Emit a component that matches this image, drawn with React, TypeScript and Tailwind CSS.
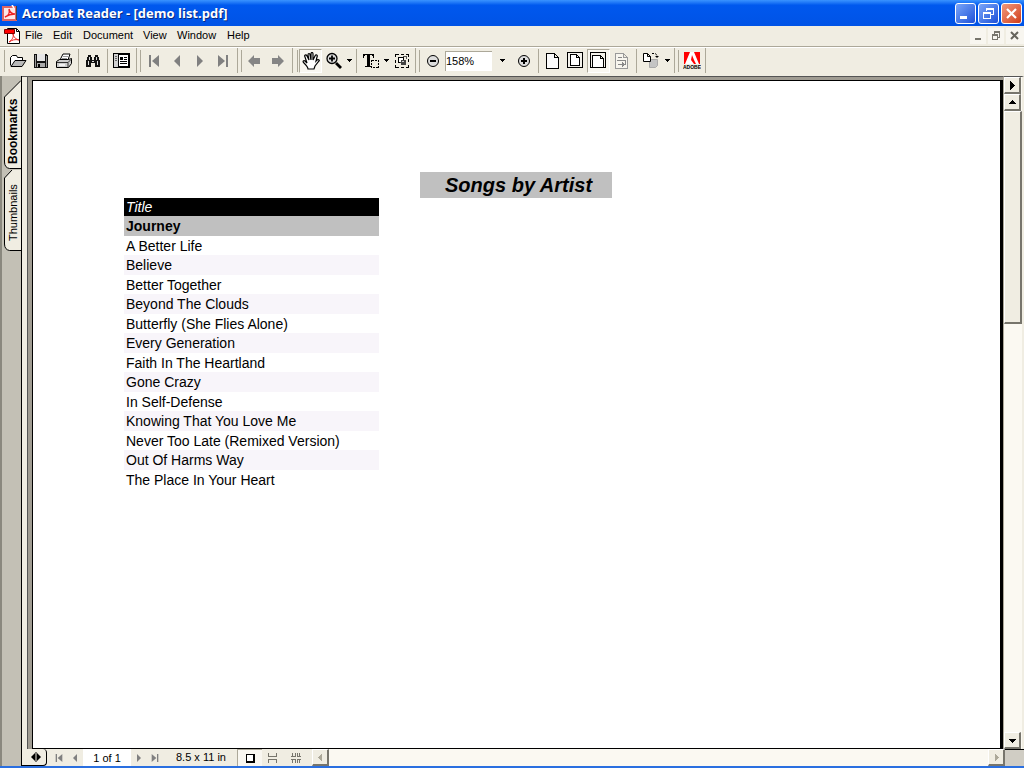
import React from 'react';

const MENUS = [
  { label: 'File', width: 'w-7' },
  { label: 'Edit', width: 'w-[30px]' },
  { label: 'Document', width: 'w-[60px]' },
  { label: 'View', width: 'w-[34px]' },
  { label: 'Window', width: 'w-[50px]' },
  { label: 'Help', width: 'w-8' },
];

const SONGS = [
  'A Better Life',
  'Believe',
  'Better Together',
  'Beyond The Clouds',
  'Butterfly (She Flies Alone)',
  'Every Generation',
  'Faith In The Heartland',
  'Gone Crazy',
  'In Self-Defense',
  'Knowing That You Love Me',
  'Never Too Late (Remixed Version)',
  'Out Of Harms Way',
  'The Place In Your Heart',
];

interface IconProps {
  children: React.ReactNode;
  w?: number;
  h?: number;
}

function Icon({ children, w = 18, h = 18 }: IconProps) {
  return (
    <svg width={w} height={h} viewBox={`0 0 ${w} ${h}`} fill="none" className="shrink-0" shapeRendering="crispEdges" aria-hidden="true">
      {children}
    </svg>
  );
}

interface ToolButtonProps {
  label: string;
  pressed?: boolean;
  children: React.ReactNode;
}

function ToolButton({ label, pressed, children }: ToolButtonProps) {
  return (
    <button
      type="button"
      aria-label={label}
      className={`flex h-6 w-[23px] shrink-0 items-center justify-center ${
        pressed ? 'border border-t-[#aca899] border-l-[#aca899] border-r-white border-b-white bg-[#f9f7f1]' : ''
      }`}
    >
      {children}
    </button>
  );
}

function Separator() {
  return (
    <div className="flex w-[6px] shrink-0 justify-center">
      <div className="h-6 w-px bg-[#aca899]" />
    </div>
  );
}

function Group({ children, className = 'pl-[3px] pr-[3px]' }: { children: React.ReactNode; className?: string }) {
  return (
    <div className={`flex h-[25px] shrink-0 items-center border-r border-[#aca899] ${className}`}>
      <div className="mr-px h-[22px] w-px shrink-0 bg-[#aca899]" />
      {children}
    </div>
  );
}

function DropArrow({ label, width }: { label: string; width: string }) {
  return (
    <button type="button" aria-label={label} className={`flex h-6 shrink-0 items-center justify-center ${width}`}>
      <Icon w={5} h={3}><path d="M0 0h5v1h-5zM1 1h3v1h-3zM2 2h1v1h-1z" fill="#000" /></Icon>
    </button>
  );
}

function Triangle({ dir, bar, small }: { dir: 'left' | 'right'; bar?: boolean; small?: boolean }) {
  const size = small ? 8 : 12;
  return (
    <svg width={size} height={size} viewBox="0 0 12 12" className={dir === 'right' ? 'rotate-180' : ''} fill="#808080" aria-hidden="true">
      {bar && <path d="M1 0h2v12h-2z" />}
      <path d={bar ? 'M11 0v12L4 6z' : 'M9 0v12L3 6z'} />
    </svg>
  );
}

function PdfIcon() {
  return (
    <svg width="18" height="18" viewBox="0 0 18 18" fill="none" aria-hidden="true">
      <path d="M3.500 1.500h9l3 3v12h-12z" fill="#fff" stroke="#000" />
      <path d="M12.500 1.500v3h3" stroke="#000" />
      <path d="M0.500 2.500h10v4h-10z" fill="#f00" stroke="#700" />
      <path d="M5 15c3-2 5-5 4-8 1 4 3 5 6 6-4-1-7 0-10 2z" stroke="#e22" />
    </svg>
  );
}

function TitleBar() {
  return (
    <header className="flex h-[26px] shrink-0 items-center bg-linear-to-b from-[#3a93ff] via-[#0058ee] via-20% to-[#0053e6] pr-[2px] pl-[2px]">
      <svg width="16" height="16" viewBox="0 0 16 16" fill="none" aria-hidden="true">
        <path d="M1 2h13v13H1z" fill="#fce8e8" stroke="#d66" strokeWidth="2" />
        <path d="M3 12c3-1 5-4 4-8 1 4 3 5 6 5-4 0-7 1-10 3z" stroke="#e22" strokeWidth="1.400" />
        <path d="M14.500 1v14" stroke="#444" />
        <path d="M10 0l2 3" stroke="#fff" strokeWidth="1.500" />
      </svg>
      <h1 className="ml-1 flex-1 text-[13px] leading-4 font-bold text-white font-['Open_Sans',sans-serif] [text-shadow:1px_1px_#0a2a80]">
        Acrobat Reader - [demo list.pdf]
      </h1>
      <div className="flex gap-[2px]">
        <button type="button" aria-label="Minimize" className="flex h-[21px] w-[21px] items-center justify-center rounded-[3px] border border-white bg-linear-to-br from-[#7ba5f8] to-[#1f4fd8]">
          <Icon w={15} h={15}><path d="M2 10h7v3h-7z" fill="#fff" /></Icon>
        </button>
        <button type="button" aria-label="Restore" className="flex h-[21px] w-[21px] items-center justify-center rounded-[3px] border border-white bg-linear-to-br from-[#7ba5f8] to-[#1f4fd8]">
          <Icon w={15} h={15}>
            <path d="M5.500 5V2.500h7v6H10" stroke="#fff" />
            <path d="M5 2h8v2H5z" fill="#fff" />
            <path d="M2.500 6.500h7v6h-7z" stroke="#fff" />
            <path d="M2 6h8v2H2z" fill="#fff" />
          </Icon>
        </button>
        <button type="button" aria-label="Close" className="flex h-[21px] w-[21px] items-center justify-center rounded-[3px] border border-white bg-linear-to-br from-[#f0987c] to-[#d03a12]">
          <svg width="15" height="15" viewBox="0 0 15 15" aria-hidden="true"><path d="M3 3l9 9M12 3l-9 9" stroke="#fff" strokeWidth="2.200" /></svg>
        </button>
      </div>
    </header>
  );
}

function MenuBar() {
  return (
    <nav className="flex h-[21px] shrink-0 items-center border-b border-[#aca899] pl-1">
      <PdfIcon />
      <div className="ml-[3px] flex flex-1">
        {MENUS.map((m) => (
          <button key={m.label} type="button" className={`h-5 pb-[2px] text-left leading-[18px] ${m.width}`}>{m.label}</button>
        ))}
      </div>
      <div className="flex gap-[2px]">
        <button type="button" aria-label="Minimize document" className="flex h-4 w-4 items-center justify-center bg-[#f8f6f0]">
          <Icon w={12} h={12}><path d="M3 8h6v2h-6z" fill="#77756c" /></Icon>
        </button>
        <button type="button" aria-label="Restore document" className="flex h-4 w-4 items-center justify-center bg-[#f8f6f0]">
          <Icon w={12} h={12}>
            <path d="M4.500 4V2.500h5v5H8M2.500 5.500h5v4h-5z" stroke="#77756c" />
            <path d="M4 1h6v1h-6zM2 4h6v1h-6z" fill="#77756c" />
          </Icon>
        </button>
        <button type="button" aria-label="Close document" className="flex h-4 w-[18px] items-center justify-center bg-[#f8f6f0]">
          <svg width="12" height="12" viewBox="0 0 12 12" aria-hidden="true"><path d="M2 2l7 7M9 2L2 9" stroke="#66645c" strokeWidth="2" /></svg>
        </button>
      </div>
    </nav>
  );
}

function Toolbar() {
  return (
    <div role="toolbar" aria-label="Main toolbar" className="flex h-[29px] shrink-0 items-start border-t border-white">
      <Group className="ml-px pr-[3px] pl-[3px]">
        <ToolButton label="Open">
          <svg width="18" height="16" viewBox="0 0 18 16" fill="none" aria-hidden="true">
            <path d="M1.500 12.500v-8l2-2h4l1 2h5v3" fill="#fff" stroke="#000" />
            <path d="M2 13.500l4-6h11l-4 6z" fill="#b8b8b8" stroke="#000" />
          </svg>
        </ToolButton>
        <ToolButton label="Save">
          <Icon w={16} h={16}>
            <path d="M1 1h13v1h1v13H1z" fill="#111" />
            <path d="M2 2h1v12H2zM13 3h1v11h-1z" fill="#999" />
            <path d="M4 1h8v7H4z" fill="#e6e6e6" />
            <path d="M4 10h8v4H4z" fill="#aaa" />
            <path d="M5 11h2v3H5z" fill="#000" />
          </Icon>
        </ToolButton>
        <ToolButton label="Print">
          <svg width="18" height="16" viewBox="0 0 18 16" fill="none" aria-hidden="true">
            <path d="M5 7l3-6h7l-2 6" fill="#fff" stroke="#000" />
            <path d="M8 3.500h5M7 5.500h5" stroke="#999" />
            <path d="M1.500 8.500l3-2h9l3-1v5l-3 4h-12z" fill="#ccc" stroke="#000" />
            <path d="M2 9.500h11v5M13 9.500l3-3" stroke="#333" />
            <path d="M4 12h6" stroke="#fff" strokeWidth="1.500" />
          </svg>
        </ToolButton>
        <Separator />
        <ToolButton label="Find">
          <Icon w={16} h={16}>
            <path d="M3 2h3v2h1v3h2V4h1V2h3v2h1v3h1v7h-5v-4H6v4H1V7h1V4h1z" fill="#111" />
            <path d="M4 4h1v3h-1zM11 4h1v3h-1zM3 8h1v4h-1zM12 8h1v4h-1zM7 8h2v1H7z" fill="#ddd" />
          </Icon>
        </ToolButton>
        <Separator />
        <ToolButton label="Show/Hide Navigation Pane">
          <Icon w={17} h={15}>
            <path d="M0 0h17v15H0z" fill="#000" />
            <path d="M1 1h4v13H1z" fill="#d0d0d0" />
            <path d="M6 2h9v11H6z" fill="#fff" />
            <path d="M7 4h3v3H7zM11 4h3v1h-3zM11 6h3v1h-3zM7 8h7v1H7zM7 10h7v1H7z" fill="#000" />
            <path d="M2 3h2v1h-2zM2 5h2v1h-2zM2 7h2v1h-2z" fill="#666" />
          </Icon>
        </ToolButton>
      </Group>

      <Group>
        <ToolButton label="First Page"><Triangle dir="left" bar /></ToolButton>
        <ToolButton label="Previous Page"><Triangle dir="left" /></ToolButton>
        <ToolButton label="Next Page"><Triangle dir="right" /></ToolButton>
        <ToolButton label="Last Page"><Triangle dir="right" bar /></ToolButton>
      </Group>

      <Group>
        <ToolButton label="Go to Previous View">
          <svg width="13" height="12" viewBox="0 0 13 12" aria-hidden="true"><path d="M0 6l6-6v3h6v6H6v3z" fill="#858585" /></svg>
        </ToolButton>
        <ToolButton label="Go to Next View">
          <svg width="13" height="12" viewBox="0 0 13 12" aria-hidden="true"><path d="M13 6L7 0v3H1v6h6v3z" fill="#858585" /></svg>
        </ToolButton>
      </Group>

      <Group className="pr-[2px] pl-1">
        <ToolButton label="Hand Tool" pressed>
          <svg width="18" height="18" viewBox="0 0 18 18" fill="#fff" stroke="#000" strokeWidth="1.200" className="shrink-0" aria-hidden="true">
            <path d="M6 17c0-2-2-4-4-6-2-2 0-3 1-2l2 2L3 5c-1-2 1-3 2-1l2 4-1-5c0-2 2-2 2 0l1 5V2c0-2 2-2 2 0v6l2-4c1-2 3-1 2 1l-1 4 1-1c1-1 3 0 2 1l-4 5-1 3z" />
          </svg>
        </ToolButton>
        <ToolButton label="Zoom In Tool">
          <svg width="18" height="18" viewBox="0 0 18 18" fill="none" className="shrink-0" aria-hidden="true">
            <circle cx="7" cy="6.500" r="5" fill="#ddd" stroke="#000" strokeWidth="1.300" />
            <path d="M4 6.500h6M7 3.500v6" stroke="#000" strokeWidth="1.800" />
            <path d="M11 11l5 5" stroke="#000" strokeWidth="2.800" />
          </svg>
        </ToolButton>
        <DropArrow label="Zoom tools" width="w-2" />
        <Separator />
        <ToolButton label="Text Select Tool">
          <Icon w={18} h={18}>
            <path d="M1 2h11v4h-1V4h-1V3H8v11h2v1H3v-1h2V3H3v1H2v2H1z" fill="#000" />
            <path d="M9.500 8.500h7v7h-7z" stroke="#000" strokeDasharray="2 1" />
          </Icon>
        </ToolButton>
        <DropArrow label="Selection tools" width="w-2" />
        <ToolButton label="Graphics Select Tool">
          <Icon w={16} h={16}>
            <path d="M1.500 4V1.500H5M7 1.500h3M12 1.500h2.500V4M14.500 6v3M14.500 12v2.500H12M10 14.500H7M5 14.500H1.500V12M1.500 10V7" stroke="#000" />
            <path d="M4.500 4.500h5v5h-5z" fill="#fff" stroke="#000" />
            <path d="M9 3h3v3" stroke="#555" />
            <circle cx="9.500" cy="9.500" r="3" fill="#444" />
            <path d="M8 8h2v1H8z" fill="#ccc" />
          </Icon>
        </ToolButton>
      </Group>

      <Group className="pr-[2px] pl-[3px]">
        <ToolButton label="Zoom Out">
          <svg width="14" height="14" viewBox="0 0 14 14" aria-hidden="true">
            <circle cx="7" cy="7" r="5.500" fill="#ddd" stroke="#000" />
            <path d="M4 7h6" stroke="#000" strokeWidth="2" />
          </svg>
        </ToolButton>
        <input aria-label="Magnification" defaultValue="158%" className="ml-px h-5 w-[47px] border-t border-l border-[#aca899] bg-white text-[11px] outline-none" />
        <DropArrow label="Magnification list" width="w-5" />
        <ToolButton label="Zoom In">
          <svg width="14" height="14" viewBox="0 0 14 14" aria-hidden="true">
            <circle cx="7" cy="7" r="5.500" fill="#ddd" stroke="#000" />
            <path d="M4 7h6M7 4v6" stroke="#000" strokeWidth="2" />
          </svg>
        </ToolButton>
        <Separator />
        <ToolButton label="Actual Size">
          <Icon w={15} h={18}><path d="M1.500 1.500h8l4 4v11h-12zM9.500 1.500v4h4" fill="#fafafa" stroke="#000" /></Icon>
        </ToolButton>
        <ToolButton label="Fit in Window">
          <Icon w={17} h={17}>
            <path d="M0.500 0.500h15v15h-15z" fill="#f4f2ec" stroke="#000" />
            <path d="M3.500 2.500h6l3 3v8h-9zM9.500 2.500v3h3" fill="#fff" stroke="#000" />
          </Icon>
        </ToolButton>
        <ToolButton label="Fit Width" pressed>
          <Icon w={17} h={17}>
            <path d="M0.500 0.500h15v15h-15z" fill="#f4f2ec" stroke="#000" />
            <path d="M2.500 15V3.500h8l3 3V15M10.500 3.500v3h3" fill="#fff" stroke="#000" />
          </Icon>
        </ToolButton>
        <ToolButton label="Reflow">
          <Icon w={15} h={18}>
            <path d="M1.500 1.500h8l4 4v11h-12zM9.500 1.500v4h4" fill="#f7f5ee" stroke="#999" />
            <path d="M4 5.500h4M3 8.500h8v4H4" stroke="#888" />
            <path d="M8 10l3 2.500-3 2.500z" fill="#888" />
          </Icon>
        </ToolButton>
        <Separator />
        <ToolButton label="Rotate View">
          <svg width="18" height="17" viewBox="0 0 18 17" fill="none" className="shrink-0" aria-hidden="true">
            <path d="M7.500 7.500h8v6l-2 2h-6z" fill="#c4c4c4" stroke="#aaa" />
            <path d="M1.500 1.500h4l3 3v5h-7zM5.500 1.500v3h3" fill="#fff" stroke="#000" />
            <path d="M10 1.500h2c2 0 3 1 3 3" stroke="#000" strokeDasharray="2 1" />
            <path d="M13 4h4l-2 2z" fill="#000" />
          </svg>
        </ToolButton>
        <DropArrow label="Rotate options" width="w-[10px]" />
      </Group>

      <Group className="pr-[2px] pl-[3px]">
        <ToolButton label="Adobe on the Web">
          <svg width="18" height="19" viewBox="0 0 18 19" className="shrink-0" aria-hidden="true">
            <path d="M1 1h16v12H1z" fill="#f00" />
            <path d="M7 1h4l5 12h-3l-2-4H8l3 4H2z" fill="#fff" />
            <path d="M9 4l2 5H8z" fill="#f00" />
            <text x="9" y="18" fontSize="5" fontWeight="bold" textAnchor="middle">ADOBE</text>
          </svg>
        </ToolButton>
      </Group>
    </div>
  );
}

function NavTabs() {
  return (
    <aside className="flex w-[22px] shrink-0 flex-col border-r border-l-2 border-r-black border-l-[#8a887e] bg-[#c3c0b5] pt-1">
      <button type="button" className="relative h-[90px] w-full">
        <svg width="18" height="90" viewBox="0 0 18 90" className="absolute top-0 right-0" aria-hidden="true">
          <path d="M18 0.500L1.500 17v65c0 4 2 6 5 6.500H18" fill="#f0ede2" stroke="#000" />
        </svg>
        <span className="relative ml-[3px] mt-3 flex h-[76px] w-4 rotate-180 items-center justify-center text-[12px] font-bold [writing-mode:vertical-rl]">Bookmarks</span>
      </button>
      <button type="button" className="relative h-[82px] w-full">
        <svg width="18" height="82" viewBox="0 0 18 82" className="absolute top-0 right-0" aria-hidden="true">
          <path d="M9 0L1.500 8v66c0 4 2 6 5 6.500H18V0z" fill="#f0ede2" />
          <path d="M9 0L1.500 8v66c0 4 2 6 5 6.500H18" fill="none" stroke="#000" />
        </svg>
        <span className="relative ml-[3px] mt-1 flex h-[78px] w-4 rotate-180 items-center justify-center text-[11px] [writing-mode:vertical-rl]">Thumbnails</span>
      </button>
    </aside>
  );
}

function DocumentPage() {
  return (
    <main className="min-w-0 flex-1 border-t border-l border-[#555] bg-[#a09c92] pt-[3px] pl-1">
      <div className="h-full border-t border-r-[3px] border-b border-l border-black bg-white pt-[91px] pl-[91px]">
        <h2 className="ml-[296px] flex h-[26px] w-48 items-center bg-[#c0c0c0] pl-[25px] text-[20px] leading-6 font-bold italic whitespace-nowrap">Songs by Artist</h2>
        <table className="w-[255px] border-collapse text-[14px] leading-[18px]">
          <thead>
            <tr className="h-[18px] bg-black text-white">
              <th scope="col" className="p-0 pl-[2px] text-left font-normal italic">Title</th>
            </tr>
          </thead>
          <tbody>
            <tr className="h-5 bg-[#c0c0c0]">
              <th scope="row" className="p-0 pl-[2px] text-left font-bold">Journey</th>
            </tr>
            {SONGS.map((song, i) => (
              <tr key={song} className={i % 2 ? 'h-5 bg-[#f8f5fa]' : 'h-[19px]'}>
                <td className="p-0 pl-[2px] whitespace-nowrap">{song}</td>
              </tr>
            ))}
          </tbody>
        </table>
      </div>
    </main>
  );
}

function ScrollButton({ label, path, muted }: { label: string; path: string; muted?: boolean }) {
  return (
    <button type="button" aria-label={label} className="flex h-[17px] w-[17px] shrink-0 items-center justify-center border-t border-r-2 border-b-2 border-l border-t-white border-r-[#77756c] border-b-[#77756c] border-l-white bg-[#f0ede2]">
      <svg width="9" height="9" viewBox="0 0 9 9" fill={muted ? '#aca899' : '#000'} shapeRendering="crispEdges" aria-hidden="true"><path d={path} /></svg>
    </button>
  );
}

function VerticalScroll() {
  return (
    <div className="flex w-[21px] shrink-0 flex-col border-t border-[#555] border-r-2 border-r-[#f0ede2] border-l border-l-[#aca899] bg-[#fbf9f2]">
      <ScrollButton label="Article menu" path="M2 0l5 4.500L2 9z" />
      <ScrollButton label="Scroll up" path="M0 6l4.500-4L9 6z" />
      <div className="h-[213px] w-[18px] border-t border-r-2 border-b-2 border-l border-t-white border-r-[#77756c] border-b-[#77756c] border-l-white bg-[#f0ede2]" />
      <div className="flex-1" />
      <ScrollButton label="Scroll down" path="M0 3l4.500 4L9 3z" />
    </div>
  );
}

function StatusBar() {
  return (
    <footer className="flex h-[17px] shrink-0 items-center">
      <div className="h-full w-[22px] shrink-0 border-r border-l-2 border-r-black border-l-[#8a887e] bg-[#c3c0b5]" />
      <button type="button" aria-label="Resize navigation pane" className="flex h-full w-[25px] shrink-0 items-center justify-center rounded-r-[4px] border-r border-b border-black pl-1">
        <svg width="10" height="10" viewBox="0 0 10 10" aria-hidden="true"><path d="M0 5l4-4v8zM10 5L6 1v8z" /><path d="M5 0v10" stroke="#000" /></svg>
      </button>
      <button type="button" aria-label="First page" className="flex h-full w-6 items-center justify-center"><Triangle dir="left" bar small /></button>
      <button type="button" aria-label="Previous page" className="flex h-full w-3 items-center"><Triangle dir="left" small /></button>
      <input aria-label="Page" defaultValue="1 of 1" className="h-full w-12 bg-white text-center text-[11px] outline-none" />
      <button type="button" aria-label="Next page" className="flex h-full w-4 items-center justify-center"><Triangle dir="right" small /></button>
      <button type="button" aria-label="Last page" className="flex h-full w-4 items-center justify-center"><Triangle dir="right" bar small /></button>
      <span className="w-[74px] pl-[13px] whitespace-nowrap">8.5 x 11 in</span>
      <button type="button" aria-label="Single page" className="flex h-full w-[25px] items-center justify-center border-t border-l border-[#aca899] bg-[#f9f7f1]">
        <Icon w={9} h={9}><path d="M0.500 0.500h8v8h-8z" fill="#fff" stroke="#000" /><path d="M1 7h7v1H1zM7 1h1v7H7z" fill="#000" /></Icon>
      </button>
      <button type="button" aria-label="Continuous" className="flex h-full w-5 items-center justify-center">
        <Icon w={9} h={10}><path d="M0.500 0v3.500h8V0M0.500 10V6.500h8V10" stroke="#77756c" /></Icon>
      </button>
      <button type="button" aria-label="Continuous facing" className="flex h-full w-7 items-center justify-center">
        <Icon w={10} h={10}><path d="M1.500 0v3.500M4.500 0v3.500M0 3.500h4.500M6.500 0v3.500H10M8.500 0v3M1.500 10V6.500M4.500 10V6.500H0M6.500 10V6.500H10M8.500 7v3" stroke="#77756c" /></Icon>
      </button>
      <div className="ml-[2px] flex h-full min-w-0 flex-1 justify-between bg-[#fbf9f2]">
        <ScrollButton label="Scroll left" path="M6 1v7L2 4.500z" muted />
        <ScrollButton label="Scroll right" path="M3 1v7l4-3.500z" muted />
      </div>
      <div className="h-full w-[19px] shrink-0 border-t border-black bg-[#d0cdc4]" />
    </footer>
  );
}

export default function App() {
  return (
    <div className="flex h-screen flex-col overflow-hidden border-b-2 border-[#2a6fe0] bg-[#f0ede2] text-[11px] text-black font-['Liberation_Sans',Arial,sans-serif]">
      <TitleBar />
      <MenuBar />
      <Toolbar />
      <div className="flex min-h-0 flex-1">
        <NavTabs />
        <div className="w-[5px] shrink-0 border-t border-[#555]" />
        <DocumentPage />
        <VerticalScroll />
      </div>
      <StatusBar />
    </div>
  );
}
